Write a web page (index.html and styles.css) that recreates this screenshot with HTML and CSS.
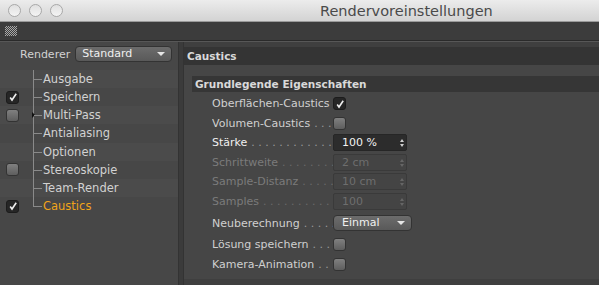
FILE: index.html
```html
<!DOCTYPE html>
<html lang="de">
<head>
    <meta charset="UTF-8">
    <title>Rendervoreinstellungen</title>
    <link rel="stylesheet" href="styles.css">
</head>
<body>
    <div class="window">
        <div class="titlebar">
            <div class="lights">
                <span class="light"></span>
                <span class="light"></span>
                <span class="light"></span>
            </div>
            <div class="title">Rendervoreinstellungen</div>
        </div>
        <div class="toolbar">
            <div class="grip"></div>
        </div>
        <div class="main">
            <!-- left: renderer + tree -->
            <aside class="sidebar">
                <div class="renderer-row">
                    <span class="renderer-label">Renderer</span>
                    <div class="select select-renderer">Standard<span class="caret"></span></div>
                </div>
                <ul class="tree">
                    <li class="tree-row"><span class="tcheck"></span><span class="branch"></span><span class="tname">Ausgabe</span></li>
                    <li class="tree-row"><span class="tcheck"><span class="box checked"><svg viewBox="0 0 10 10"><path d="M2.2 5.6 L4 8 L8.2 1.8" /></svg></span></span><span class="branch"></span><span class="tname">Speichern</span></li>
                    <li class="tree-row"><span class="tcheck"><span class="box"></span></span><span class="branch has-arrow"></span><span class="tname">Multi-Pass</span></li>
                    <li class="tree-row"><span class="tcheck"></span><span class="branch"></span><span class="tname">Antialiasing</span></li>
                    <li class="tree-row"><span class="tcheck"></span><span class="branch"></span><span class="tname">Optionen</span></li>
                    <li class="tree-row"><span class="tcheck"><span class="box"></span></span><span class="branch"></span><span class="tname">Stereoskopie</span></li>
                    <li class="tree-row"><span class="tcheck"></span><span class="branch"></span><span class="tname">Team-Render</span></li>
                    <li class="tree-row last"><span class="tcheck"><span class="box checked"><svg viewBox="0 0 10 10"><path d="M2.2 5.6 L4 8 L8.2 1.8" /></svg></span></span><span class="branch"></span><span class="tname active">Caustics</span></li>
                </ul>
            </aside>
            <div class="divider"></div>
            <!-- right: attributes -->
            <section class="content">
                <div class="panel">
                    <h1 class="panel-head">Caustics</h1>
                    <h2 class="group-head">Grundlegende Eigenschaften</h2>
                    <div class="form">
                        <div class="row"><span class="label">Oberflächen-Caustics</span><span class="box checked"><svg viewBox="0 0 10 10"><path d="M2.2 5.6 L4 8 L8.2 1.8" /></svg></span></div>
                        <div class="row"><span class="label">Volumen-Caustics<span class="leader"></span></span><span class="box"></span></div>
                        <div class="row row-field"><span class="label bright">Stärke<span class="leader"></span></span><span class="field">100 %<span class="spin"></span></span></div>
                        <div class="row row-field"><span class="label dim">Schrittweite<span class="leader"></span></span><span class="field off">2 cm<span class="spin"></span></span></div>
                        <div class="row row-field"><span class="label dim">Sample-Distanz<span class="leader"></span></span><span class="field off">10 cm<span class="spin"></span></span></div>
                        <div class="row row-field"><span class="label dim">Samples<span class="leader"></span></span><span class="field off">100<span class="spin"></span></span></div>
                        <div class="row row-select"><span class="label">Neuberechnung<span class="leader"></span></span><div class="select select-mode">Einmal<span class="caret"></span></div></div>
                        <div class="row"><span class="label">Lösung speichern<span class="leader"></span></span><span class="box"></span></div>
                        <div class="row"><span class="label">Kamera-Animation<span class="leader"></span></span><span class="box"></span></div>
                    </div>
                </div>
            </section>
        </div>
    </div>
</body>
</html>
```

FILE: styles.css
```css
html, body {
    margin: 0;
    width: 599px;
    height: 285px;
    overflow: hidden;
    background: #454545;
}
body {
    font-family: "DejaVu Sans", "Liberation Sans", sans-serif;
    font-size: 11px;
}
.window {
    display: flex;
    flex-direction: column;
    height: 100%;
}
.titlebar {
    height: 22px;
    display: flex;
    align-items: center;
    background: linear-gradient(#ececec, #d3d3d3);
    border-bottom: 1px solid #9a9a9a;
    box-sizing: border-box;
}
.lights {
    display: flex;
    gap: 8px;
    padding-left: 8px;
}
.light {
    width: 11px;
    height: 11px;
    border-radius: 50%;
    border: 1px solid #a8a8a8;
    background: linear-gradient(#e0e0e0, #f4f4f4);
}
.title {
    margin-left: 257px;
    color: #4a4a4a;
    font-size: 14.5px;
}
.toolbar {
    height: 18px;
    background: #3c3c3c;
    border-bottom: 1px solid #2a2a2a;
    display: flex;
    align-items: center;
    padding-left: 5px;
}
.grip {
    width: 12px;
    height: 10px;
    background: repeating-conic-gradient(#a8a8a8 0 25%, transparent 0 50%);
    background-size: 2px 2px;
}
.main {
    flex: 1;
    display: flex;
    border-top: 1px solid #575757;
}
.sidebar {
    width: 178px;
    background: #474747;
}
.renderer-row {
    display: flex;
    align-items: center;
    height: 22px;
    padding-top: 1px;
}
.renderer-label {
    color: #d2d2d2;
    margin-left: 20px;
    margin-right: 5px;
    font-size: 11px;
}
.select {
    position: relative;
    box-sizing: border-box;
    height: 16px;
    border-radius: 4px;
    background: linear-gradient(#6c6c6c, #595959);
    border: 1px solid #333;
    color: #f0f0f0;
    font-size: 11px;
    line-height: 14px;
    padding-left: 6px;
}
.select-renderer {
    width: 97px;
}
.caret {
    position: absolute;
    right: 6px;
    top: 5px;
    border-left: 4px solid transparent;
    border-right: 4px solid transparent;
    border-top: 4px solid #e6e6e6;
}
.tree {
    list-style: none;
    margin: 5px 0 0;
    padding: 0;
}
.tree-row {
    display: flex;
    align-items: center;
    height: 18.15px;
    position: relative;
}
.tree-row:nth-child(odd) {
    background: #4b4b4b;
}
.tcheck {
    width: 25px;
    display: flex;
    justify-content: center;
}
.branch {
    align-self: stretch;
    width: 9px;
    margin-left: 8px;
    border-left: 1px solid #8a8a8a;
    position: relative;
}
.branch::after {
    content: "";
    position: absolute;
    left: 0;
    top: 9px;
    width: 8px;
    border-top: 1px solid #8a8a8a;
}
.last .branch {
    align-self: flex-start;
    height: 10px;
}
.has-arrow::before {
    content: "";
    position: absolute;
    left: -2px;
    top: 6px;
    border-top: 3px solid transparent;
    border-bottom: 3px solid transparent;
    border-left: 3px solid #111;
}
.tname {
    color: #d2d2d2;
    font-size: 11.5px;
}
.tname.active {
    color: #f0a41a;
}
.box {
    display: inline-flex;
    align-items: center;
    justify-content: center;
    width: 11px;
    height: 11px;
    border-radius: 3px;
    border: 1px solid #333;
    background: linear-gradient(#808080, #5e5e5e);
}
.box.checked {
    background: #262626;
    border-color: #1c1c1c;
}
.box svg {
    width: 10px;
    height: 10px;
}
.box path {
    fill: none;
    stroke: #eeeeee;
    stroke-width: 1.6;
}
.divider {
    width: 4px;
    background: #3b3b3b;
    border-left: 1px solid #333;
    border-right: 1px solid #333;
}
.content {
    flex: 1;
    background: #3f3f3f;
    padding-top: 5px;
}
.panel {
    background: #464646;
    height: 232px;
}
.panel-head {
    margin: 0;
    background: #343434;
    color: #d9d9d9;
    font-size: 10.5px;
    font-weight: bold;
    height: 18px;
    line-height: 18px;
    padding-left: 3px;
}
.group-head {
    margin: 11px 0 0 8px;
    background: #363636;
    color: #d9d9d9;
    font-size: 10.5px;
    font-weight: bold;
    height: 16px;
    line-height: 16px;
    padding-left: 3px;
}
.form {
    padding: 2px 0 0 28px;
}
.row {
    display: flex;
    align-items: center;
    height: 19.5px;
}
.label {
    display: flex;
    width: 121px;
    overflow: hidden;
    white-space: nowrap;
    color: #d0d0d0;
    font-size: 11px;
}
.label.bright {
    color: #f0f0f0;
}
.label.dim {
    color: #7b7b7b;
}
.leader {
    flex: 1;
    overflow: hidden;
    color: #9a9a9a;
    padding-left: 4px;
}
.leader::after {
    content: ". . . . . . . . . . . . . . . . . . . . . . . . . . . . . . .";
}
.dim .leader {
    color: #6a6a6a;
}
.field {
    position: relative;
    box-sizing: border-box;
    width: 74px;
    height: 17px;
    background: #2c2c2c;
    border: 1px solid #262626;
    border-radius: 2px;
    color: #f2f2f2;
    font-size: 11px;
    line-height: 15px;
    padding-left: 8px;
}
.field.off {
    background: #444;
    border-color: #3a3a3a;
    color: #6e6e6e;
}
.spin {
    position: absolute;
    right: 4px;
    top: 4px;
    width: 0;
    height: 8px;
}
.spin::before, .spin::after {
    content: "";
    position: absolute;
    left: -2px;
    border-left: 2px solid transparent;
    border-right: 2px solid transparent;
}
.spin::before {
    top: 0;
    border-bottom: 3px solid #cfcfcf;
}
.spin::after {
    bottom: 0;
    border-top: 3px solid #cfcfcf;
}
.off .spin::before {
    border-bottom-color: #666;
}
.off .spin::after {
    border-top-color: #666;
}
.row-select {
    height: 24px;
}
.select-mode {
    width: 79px;
    padding-left: 8px;
}
```
